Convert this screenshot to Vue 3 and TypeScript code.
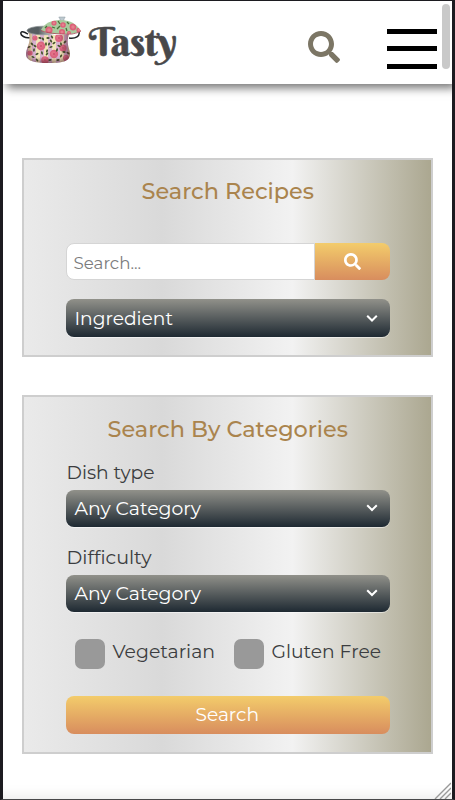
<script setup lang="ts">
import { h, ref, type FunctionalComponent } from 'vue'

interface FitTextProps {
  text: string
  width: number
  size: number
  weight?: number
}

// Single line of text set to a fixed measure.
const FitText: FunctionalComponent<FitTextProps> = (props) =>
  h(
    'svg',
    {
      width: props.width,
      height: 30,
      style: { display: 'block', overflow: 'visible', flex: 'none' },
    },
    [
      h(
        'text',
        {
          x: -0.5,
          y: 22,
          fill: 'currentColor',
          textLength: props.width + 0.5,
          lengthAdjust: 'spacingAndGlyphs',
          'font-size': props.size,
          'font-weight': props.weight ?? 400,
        },
        props.text,
      ),
    ],
  )
FitText.props = ['text', 'width', 'size', 'weight']

const filters = [
  { label: 'Dish type', width: 87.5 },
  { label: 'Difficulty', width: 84.5 },
]
const diets = ref([
  { label: 'Vegetarian', width: 102, checked: false },
  { label: 'Gluten Free', width: 109, checked: false },
])
const roses = [
  [41, 46, 4.4], [59, 38, 4], [63, 48, 3.6], [45, 60, 3.8], [35, 38, 2.6],
  [54, 54, 4.2], [30, 53, 2.6], [66, 58, 3],
]
const leaves = [
  [48, 38], [51, 41], [47, 51], [51, 47], [35, 46], [34, 50], [37, 54], [59, 46],
  [61, 44], [65, 42], [40, 38], [43, 39], [61, 56], [50, 60], [37, 60], [57, 50],
  [29, 47], [68, 53], [46, 44], [54, 43], [33, 57], [42, 53], [47, 54], [64, 52],
  [52, 37], [49, 44], [58, 60], [32, 44],
]
const lidRoses = [
  [49, 30, 3.6], [54, 23, 2.6], [63, 25, 2.8], [73, 27, 3.4], [62, 32, 3], [79, 30, 2.6], [69, 33, 2],
]
</script>

<template>
  <div class="frame">
    <header class="bar">
      <div class="brand">
        <svg class="pot" width="62" height="48" viewBox="20 16 62 48">
          <defs>
            <linearGradient id="steel"><stop stop-color="#596164" /><stop offset=".35" stop-color="#555d60" /><stop offset=".8" stop-color="#cfd3d3" /><stop offset="1" stop-color="#e5e8e8" /></linearGradient>
            <linearGradient id="shade"><stop stop-color="#501828" stop-opacity=".55" /><stop offset=".2" stop-color="#501828" stop-opacity="0" /><stop offset=".75" stop-color="#501828" stop-opacity="0" /><stop offset="1" stop-color="#501828" stop-opacity=".6" /></linearGradient>
            <linearGradient id="base" x2="0" y2="1"><stop offset=".8" stop-color="#401820" stop-opacity="0" /><stop offset="1" stop-color="#401820" stop-opacity=".6" /></linearGradient>
            <pattern id="stripe" width="8" height="8" patternUnits="userSpaceOnUse"><rect width="8" height="8" fill="#f1e4b9" /><rect width="4" height="8" fill="#d8b3cf" /></pattern>
            <clipPath id="bowl"><path d="M28 31C36 35 57 36 69 34C66 43 69 47 70 53C71 62 61 63 48 63C35 63 25 61 26 53C27 46 32 42 28 31Z" /></clipPath>
            <clipPath id="lid"><path d="M41 30C45 21 57 18 68 21C75 23 78 27 81 31C76 34 68 34 60 34C51 34 44 33 41 30Z" /></clipPath>
          </defs>
          <path d="M31 37.500C25 39 20 35 21 32.500C22 30.500 26 33 28 34M69 38C76 39 80 36 79 32" fill="none" stroke="#202326" stroke-width="1.500" />
          <g clip-path="url(#bowl)">
            <rect x="24" y="28" width="50" height="37" fill="url(#stripe)" />
            <g v-for="(r, i) in roses" :key="i">
              <circle :cx="r[0]" :cy="r[1]" :r="r[2]" fill="#dc6480" />
              <circle :cx="r[0]! - .6" :cy="r[1]! - .5" :r="r[2]! * .55" fill="#e27288" />
              <circle :cx="r[0]" :cy="r[1]" :r="r[2]! * .25" fill="#cf5270" />
            </g>
            <ellipse v-for="(l, i) in leaves" :key="'l' + i" :cx="l[0]" :cy="l[1]" rx="1.7" ry=".9" :transform="`rotate(${i * 55} ${l[0]} ${l[1]})`" fill="#40522a" />
            <rect x="25" y="29" width="46" height="35" fill="url(#shade)" />
            <rect x="25" y="29" width="46" height="35" fill="url(#base)" />
          </g>
          <ellipse cx="43" cy="30.500" rx="16" ry="4.300" fill="url(#steel)" stroke="#8b9294" stroke-width=".7" />
          <path d="M60 21V19L58.800 17H65.200L64 19V21Z" fill="#bdc9cf" stroke="#89979f" stroke-width=".5" />
          <g clip-path="url(#lid)">
            <rect x="40" y="17" width="42" height="19" fill="#a9cb9e" />
            <g v-for="(r, i) in lidRoses" :key="'t' + i">
              <circle :cx="r[0]" :cy="r[1]" :r="r[2]" fill="#dc6078" />
              <circle :cx="r[0]" :cy="r[1]" :r="r[2]! * .5" fill="#e4808c" />
            </g>
            <path d="M57 29l3-3M67 31l-1-3M58 21l2 3M67 22l2 2M52 27l3 1M45 28l2-2" stroke="#47713a" stroke-width="1.300" />
          </g>
          <path d="M41 30.500C49 34 65 34.500 72 34C77 33 80 32 81 31" fill="none" stroke="#a94859" stroke-width=".8" />
        </svg>
        <svg class="wordmark" width="90" height="48" viewBox="0 0 90 48">
          <text x="1" y="40" textLength="88" lengthAdjust="spacingAndGlyphs">Tasty</text>
        </svg>
      </div>
      <div class="tools">
        <svg class="find" width="32" height="32" viewBox="0 0 512 512"><path fill="currentColor" d="M505 442.700 405.300 343c-4.500-4.500-10.600-7-17-7H372c27.600-35.300 44-79.700 44-128C416 93.100 322.900 0 208 0S0 93.100 0 208s93.100 208 208 208c48.300 0 92.700-16.400 128-44v16.300c0 6.400 2.500 12.500 7 17l99.700 99.700c9.400 9.400 24.600 9.400 33.900 0l28.300-28.300c9.400-9.400 9.400-24.600.1-34zM208 336c-70.700 0-128-57.200-128-128 0-70.700 57.200-128 128-128 70.700 0 128 57.200 128 128 0 70.700-57.200 128-128 128z" /></svg>
        <div class="burger"><i /><i /><i /></div>
      </div>
    </header>

    <main>
      <section class="panel recipes">
        <h2><FitText text="Search Recipes" :width="172" :size="22.4" :weight="500" /></h2>
        <div class="search">
          <div class="field"><FitText text="Search..." :width="67" :size="16" /></div>
          <button class="go" aria-label="Search">
            <svg width="17" height="17" viewBox="0 0 512 512"><path fill="currentColor" d="M505 442.700 405.300 343c-4.500-4.500-10.600-7-17-7H372c27.600-35.300 44-79.700 44-128C416 93.100 322.900 0 208 0S0 93.100 0 208s93.100 208 208 208c48.300 0 92.700-16.400 128-44v16.300c0 6.400 2.500 12.500 7 17l99.700 99.700c9.400 9.400 24.600 9.400 33.900 0l28.300-28.300c9.400-9.400 9.400-24.600.1-34zM208 336c-70.700 0-128-57.200-128-128 0-70.700 57.200-128 128-128 70.700 0 128 57.200 128 128 0 70.700-57.200 128-128 128z" /></svg>
          </button>
        </div>
        <div class="select first">
          <FitText text="Ingredient" :width="98" :size="19" />
          <svg width="12" height="8" viewBox="0 0 12 8"><path d="M1.200 1.200 6 6 10.800 1.200" /></svg>
        </div>
      </section>

      <section class="panel categories">
        <h2><FitText text="Search By Categories" :width="240" :size="22.4" :weight="500" /></h2>
        <div v-for="f in filters" :key="f.label" class="filter">
          <div class="label"><FitText :text="f.label" :width="f.width" :size="19" /></div>
          <div class="select">
            <FitText text="Any Category" :width="126" :size="19" />
            <svg width="12" height="8" viewBox="0 0 12 8"><path d="M1.200 1.200 6 6 10.800 1.200" /></svg>
          </div>
        </div>
        <div class="diets">
          <div v-for="d in diets" :key="d.label" class="diet" @click="d.checked = !d.checked">
            <span class="box" />
            <FitText :text="d.label" :width="d.width" :size="19" />
          </div>
        </div>
        <button class="submit"><FitText text="Search" :width="63" :size="19" /></button>
      </section>
    </main>

    <div class="scrollbar" />
    <svg class="grip" width="17" height="17" viewBox="0 0 17 17"><path d="M1 17 17 1M6 17 17 6M11 17 17 11" /></svg>
  </div>
</template>

<style>
body { margin: 0; }
</style>

<style scoped>
.frame {
  position: relative;
  box-sizing: border-box;
  width: 455px;
  height: 800px;
  overflow: hidden;
  border: solid #1c1b20;
  border-width: 1px 3px;
  border-bottom-color: #48484a;
  background: #fff;
  box-shadow: inset 0 -14px 14px -12px #e8e8e8;
  font-family: Montserrat, Inter, sans-serif;
  color: #3b3d40;
}
.bar {
  display: flex;
  align-items: flex-start;
  justify-content: space-between;
  box-sizing: border-box;
  height: 83px;
  padding: 15px 15px 0 17px;
  background: #fff;
  box-shadow: 4px 4px 9px rgba(0, 0, 0, .55);
}
.brand, .tools { display: flex; }
.wordmark { margin-left: 6px; overflow: visible; }
.wordmark text {
  font: 400 39px "Berkshire Swash", "Liberation Serif", serif;
  fill: #48484a;
  stroke: #48484a;
  stroke-width: .6px;
}
.tools { gap: 47px; }
.find { margin-top: 15px; color: #7c7665; }
.burger { display: flex; flex-direction: column; gap: 12px; width: 50px; padding-top: 13px; }
.burger i { height: 5px; background: #000; }
.burger i:last-child { margin-top: 1px; }
main { display: flex; flex-direction: column; gap: 38px; padding: 74px 19px 0; }
.panel {
  box-sizing: border-box;
  width: 411px;
  padding: 0 41px 0 42px;
  border: 2px solid #cecece;
  background: linear-gradient(90deg, #eaeaea, #d9d9d9 34%, #f2f2f2 66%, #aba790);
}
.recipes { height: 199px; }
.categories { height: 359px; }
h2 { display: flex; justify-content: center; margin: 0; padding-top: 17px; color: #aa844d; }
.categories h2 { padding-top: 18px; }
.search { display: flex; height: 37px; margin-top: 36px; }
.field {
  box-sizing: border-box;
  flex: 1;
  padding: 3px 0 0 7px;
  border: 1px solid #d5d5d5;
  border-radius: 8px 0 0 8px;
  background: #fff;
  color: #7b7c7d;
}
button { display: flex; align-items: center; justify-content: center; padding: 0; border: 0; font-family: inherit; color: #fff; background: linear-gradient(#f3cc6b, #d88d5e); }
.go { width: 75px; border-radius: 0 8px 8px 0; }
.select {
  display: flex;
  align-items: center;
  justify-content: space-between;
  box-sizing: border-box;
  height: 37px;
  padding: 0 12px 0 9px;
  border-radius: 8px;
  color: #fff;
  background: linear-gradient(#91918a, #1e2932);
  box-shadow: 0 1px 0 rgba(255, 255, 255, .5);
}
.first { height: 38px; margin-top: 19px; padding-bottom: 1px; }
.first path { transform: translateY(.5px); }
.select path { fill: none; stroke: #fff; stroke-width: 2; }
.filter { height: 85px; }
.label { height: 44.500px; box-sizing: border-box; padding: 12px 0 0 .5px; }
.diets { display: flex; gap: 19px; padding: 24px 0 0 9px; }
.diet { display: flex; gap: 8px; }
.box { width: 30px; height: 30px; flex: none; border-radius: 7px; background: #999; }
.diet svg { margin-top: -3.500px; }
.submit { width: 100%; height: 38px; margin-top: 27px; border-radius: 8px; }
.submit svg { margin: -2px 1px 0 0; }
.scrollbar { position: absolute; top: 3px; right: 2px; width: 8px; height: 65px; border-radius: 4px; background: #c9c9c9; }
.grip { position: absolute; right: 1px; bottom: 0; }
.grip path { stroke: #999; stroke-width: 1.400; }
</style>
